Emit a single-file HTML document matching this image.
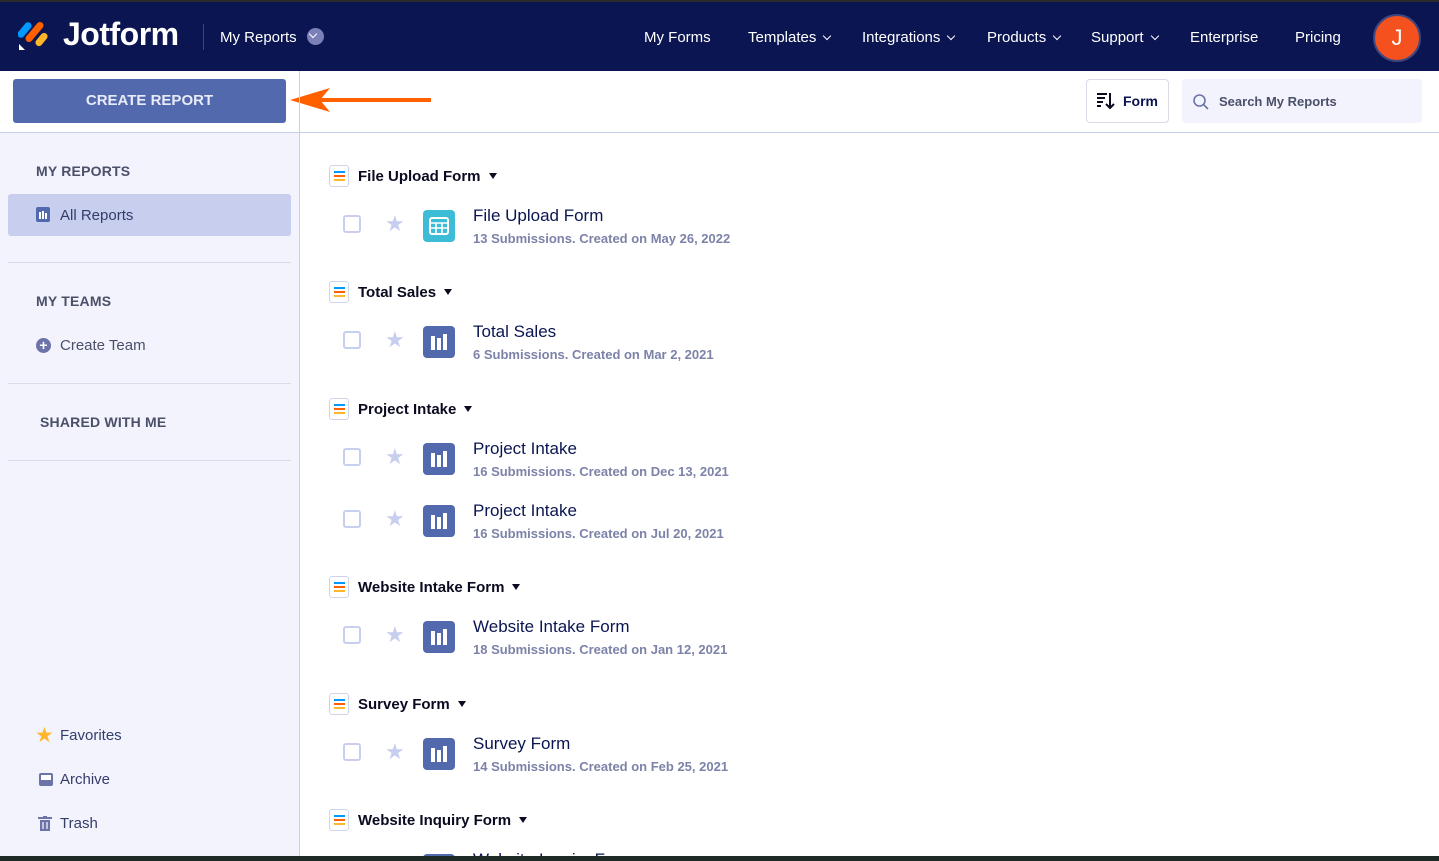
<!DOCTYPE html>
<html><head><meta charset="utf-8"><style>
*{margin:0;padding:0;box-sizing:border-box}
html,body{width:1439px;height:861px;overflow:hidden}
body{font-family:"Liberation Sans",sans-serif;background:#fff;position:relative}
.hdr{position:absolute;left:0;top:0;width:1439px;height:71px;background:#0a1551;border-top:2px solid #2b2b2b}
.a{position:absolute;white-space:nowrap}
.nav{color:#fff;font-size:15px;top:27px}
.chev{display:inline-block;width:6px;height:6px;border-right:1.5px solid #fff;border-bottom:1.5px solid #fff;transform:rotate(45deg);margin-left:8px;position:relative;top:-3px}
.side{position:absolute;left:0;top:133px;width:300px;height:723px;background:#f3f3fe;border-right:1px solid #c8ceed}
.sh{font-size:14px;color:#4a5068;font-weight:bold;letter-spacing:.2px}
.si{font-size:15px;color:#343c6a}
.hr{position:absolute;left:8px;width:283px;height:1px;background:#dadde8}
.gh{font-size:15px;font-weight:bold;color:#0a0a20}
.gicon{position:absolute;width:20px;height:22px;border:1px solid #d0d4ea;border-radius:3px;background:#fff}
.gicon i{position:absolute;left:4px;width:11px;height:2px}
.tri{display:inline-block;border-left:4.5px solid transparent;border-right:4.5px solid transparent;border-top:6px solid #0a0a20;margin-left:8px;position:relative;top:-2px}
.cb{position:absolute;width:18px;height:18px;border:2px solid #c8ceed;border-radius:3px}
.star{position:absolute;color:#c8ceed;font-size:22px;line-height:22px}
.ric{position:absolute;width:32px;height:32px;border-radius:4px;background:#5369ad}
.ric i{position:absolute;bottom:8px;width:4px;background:#fff}
.tt{font-size:17px;color:#0a1551}
.st{font-size:13px;color:#7c82a8;font-weight:bold}
#clip{position:absolute;left:300px;top:133px;width:1139px;height:723px;overflow:hidden}
</style></head><body>
<div class="hdr">
 <svg class="a" style="left:18px;top:15px" width="32" height="34" viewBox="0 0 32 34"><rect x="3" y="4" width="7" height="18" rx="3.5" transform="rotate(40 6.5 13)" fill="#0099ff"/><rect x="13" y="3" width="7" height="24" rx="3.5" transform="rotate(40 16.5 15)" fill="#ff6100"/><rect x="20" y="15" width="7" height="15" rx="3.5" transform="rotate(40 23.5 22.5)" fill="#ffb629"/><path d="M1 27 L1 33 L7 33 Z" fill="#fff"/></svg>
 <div class="a" style="left:63px;top:14px;color:#fff;font-size:32px;font-weight:bold;letter-spacing:-.5px">Jotform</div>
 <div class="a" style="left:203px;top:22px;width:1px;height:26px;background:#3a4478"></div>
 <div class="a nav" style="left:220px">My Reports</div>
 <div class="a" style="left:307px;top:26px;width:17px;height:17px;border-radius:50%;background:#7b80b8"><span class="chev" style="position:absolute;left:3px;top:3px;width:6px;height:6px;margin:0"></span></div>
 <div class="a nav" style="left:644px">My Forms</div>
 <div class="a nav" style="left:748px">Templates<span class="chev"></span></div>
 <div class="a nav" style="left:862px">Integrations<span class="chev"></span></div>
 <div class="a nav" style="left:987px">Products<span class="chev"></span></div>
 <div class="a nav" style="left:1091px">Support<span class="chev"></span></div>
 <div class="a nav" style="left:1190px">Enterprise</div>
 <div class="a nav" style="left:1295px">Pricing</div>
 <div class="a" style="left:1373px;top:12px;width:48px;height:48px;border-radius:50%;background:#f4511e;border:2px solid #3d4680;color:#fff;font-size:22px;text-align:center;line-height:44px">J</div>
</div>
<div class="a" style="left:0;top:132px;width:1439px;height:1px;background:#c8ceed"></div>
<div class="a" style="left:13px;top:79px;width:273px;height:44px;background:#5369ad;border-radius:3px;color:#e8ebf8;font-size:15px;font-weight:bold;text-align:center;line-height:44px">CREATE REPORT</div>
<svg class="a" style="left:286px;top:84px" width="146" height="32"><path d="M145 16 L30 16" stroke="#ff6100" stroke-width="4"/><path d="M4 16 L44 4 L34 16 L44 28 Z" fill="#ff6100"/></svg>
<div class="a" style="left:299px;top:71px;width:1px;height:62px;background:#c8ceed"></div>
<div class="a" style="left:1086px;top:79px;width:83px;height:44px;border:1px solid #d8dbe8;border-radius:4px"></div>
<svg class="a" style="left:1096px;top:91px" width="20" height="20"><g stroke="#0a0a20" stroke-width="2"><path d="M1 3h10M1 7h8M1 11h6M1 15h4M14 2v15M10 13l4 4 4-4" fill="none"/></g></svg>
<div class="a" style="left:1123px;top:93px;font-size:14px;font-weight:bold;color:#0a1551">Form</div>
<div class="a" style="left:1182px;top:79px;width:240px;height:44px;background:#f3f3fe;border-radius:4px"></div>
<svg class="a" style="left:1192px;top:93px" width="18" height="18"><circle cx="7.5" cy="7.5" r="5.5" stroke="#6c73a8" stroke-width="1.6" fill="none"/><path d="M11.5 11.5l4.5 4.5" stroke="#6c73a8" stroke-width="1.6"/></svg>
<div class="a" style="left:1219px;top:94px;font-size:13px;font-weight:bold;color:#4a5068">Search My Reports</div>

<div class="side"></div>
<div class="a sh" style="left:36px;top:163px">MY REPORTS</div>
<div class="a" style="left:8px;top:194px;width:283px;height:42px;background:#c8ceed;border-radius:3px"></div>
<div class="a" style="left:36px;top:207px;width:14px;height:15px;background:#5369ad;border-radius:2px"><i style="position:absolute;left:3px;top:5px;width:2px;height:7px;background:#fff"></i><i style="position:absolute;left:6px;top:4px;width:2px;height:8px;background:#fff"></i><i style="position:absolute;left:9px;top:6px;width:2px;height:6px;background:#fff"></i></div>
<div class="a si" style="left:60px;top:207px">All Reports</div>
<div class="hr" style="top:262px"></div>
<div class="a sh" style="left:36px;top:293px">MY TEAMS</div>
<div class="a" style="left:36px;top:338px;width:15px;height:15px;border-radius:50%;background:#6c73a8;color:#fff;font-size:14px;line-height:15px;text-align:center;font-weight:bold">+</div>
<div class="a si" style="left:60px;top:337px;color:#4a5068">Create Team</div>
<div class="hr" style="top:383px"></div>
<div class="a sh" style="left:40px;top:414px">SHARED WITH ME</div>
<div class="hr" style="top:460px"></div>
<div class="a" style="left:35px;top:723px;color:#ffb629;font-size:21px">★</div>
<div class="a si" style="left:60px;top:727px">Favorites</div>
<div class="a" style="left:39px;top:773px;width:14px;height:13px;border:2px solid #6c73a8;border-radius:2px;background:linear-gradient(#fff 0 55%,#6c73a8 55%)"></div>
<div class="a si" style="left:60px;top:771px">Archive</div>
<svg class="a" style="left:38px;top:816px" width="14" height="16"><rect x="0" y="1" width="14" height="2" fill="#6c73a8"/><rect x="5" y="0" width="4" height="2" fill="#6c73a8"/><path d="M2 4h10v11H2z" fill="#6c73a8"/><path d="M5 6v7M9 6v7" stroke="#f3f3fe" stroke-width="1.3"/></svg>
<div class="a si" style="left:60px;top:815px">Trash</div>

<div id="clip"><div id="c" style="position:absolute;left:-300px;top:-133px;width:1439px;height:856px"></div></div>
<script>
var G=[[176,"File Upload Form",[[215,"File Upload Form","13 Submissions. Created on May 26, 2022",1]]],
[292,"Total Sales",[[331,"Total Sales","6 Submissions. Created on Mar 2, 2021"]]],
[409,"Project Intake",[[448,"Project Intake","16 Submissions. Created on Dec 13, 2021"],[510,"Project Intake","16 Submissions. Created on Jul 20, 2021"]]],
[587,"Website Intake Form",[[626,"Website Intake Form","18 Submissions. Created on Jan 12, 2021"]]],
[704,"Survey Form",[[743,"Survey Form","14 Submissions. Created on Feb 25, 2021"]]],
[820,"Website Inquiry Form",[[859,"Website Inquiry Form",""]]]];
var h="";
G.forEach(function(g){var y=g[0];
h+='<div class="gicon" style="left:329px;top:'+(y-11)+'px"><i style="top:5px;background:#0099ff"></i><i style="top:9px;background:#ff6100"></i><i style="top:13px;background:#ffb629"></i></div>';
h+='<div class="a gh" style="left:358px;top:'+(y-8)+'px">'+g[1]+'<span class="tri"></span></div>';
g[2].forEach(function(r){var t=r[0];
h+='<div class="cb" style="left:343px;top:'+(t)+'px"></div><div class="star" style="left:385px;top:'+(t-2)+'px">★</div>';
if(r[3])h+='<div class="ric" style="left:423px;top:'+(t-5)+'px;background:#3cbcd6"><svg style="position:absolute;left:6px;top:6px" width="20" height="20"><rect x="1" y="2" width="18" height="16" rx="2" stroke="#fff" stroke-width="2" fill="none"/><path d="M1 7h18M1 12h18M7 7v11M13 7v11" stroke="#fff" stroke-width="1.6"/></svg></div>';
else h+='<div class="ric" style="left:423px;top:'+(t-5)+'px"><i style="left:8px;height:14px"></i><i style="left:14px;height:12px"></i><i style="left:20px;height:16px"></i></div>';
h+='<div class="a tt" style="left:473px;top:'+(t-9)+'px">'+r[1]+'</div><div class="a st" style="left:473px;top:'+(t+16)+'px">'+r[2]+'</div>';});});
document.getElementById("c").innerHTML=h;
</script>
<div class="a" style="left:0;top:856px;width:1439px;height:5px;background:#1e2a26"></div>
</body></html>
